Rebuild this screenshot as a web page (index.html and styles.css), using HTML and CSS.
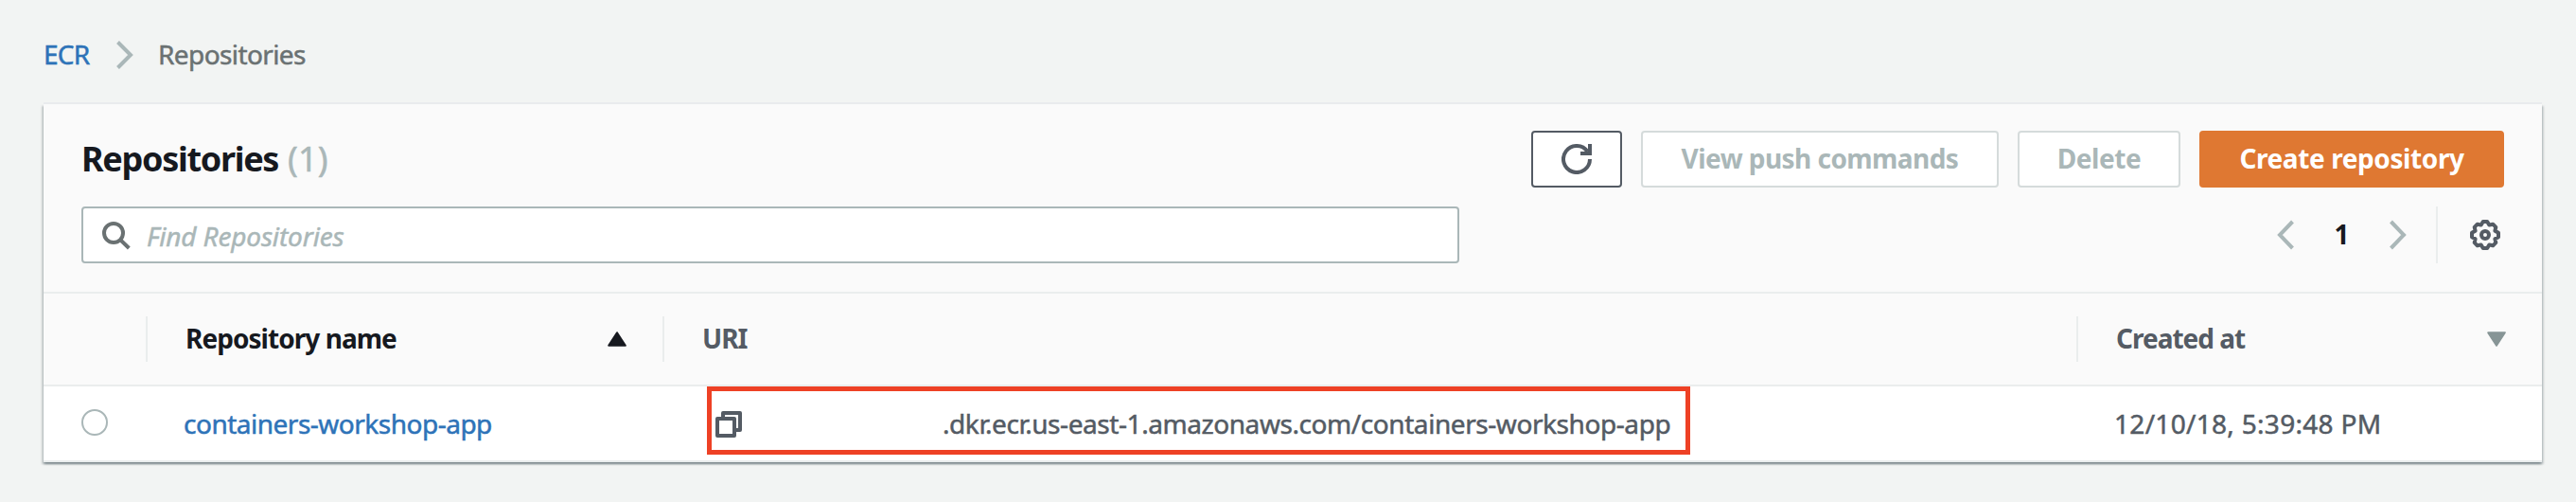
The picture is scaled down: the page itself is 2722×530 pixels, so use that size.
FILE: index.html
```html
<!DOCTYPE html>
<html lang="en">
<head>
<meta charset="utf-8">
<title>ECR Repositories</title>
<link rel="stylesheet" href="styles.css">
</head>
<body>
<nav class="breadcrumb">
  <a class="crumb-link">ECR</a>
  <svg class="crumb-sep" width="20" height="32" viewBox="0 0 20 32"><path d="M2.5 2.5 16 16 2.5 29.5"/></svg>
  <span class="crumb-current">Repositories</span>
</nav>
<main class="card">
  <header class="toolbar">
    <div class="row title-row">
      <h1 class="title"><span class="title-name">Repositories</span><span class="count">(1)</span></h1>
      <div class="actions">
        <button class="btn btn-refresh" aria-label="Refresh">
          <svg width="32" height="32" viewBox="0 0 32 32"><path d="M30 16A14 14 0 1 1 27.5 8"/><path d="M30 0V10H20"/></svg>
        </button>
        <button class="btn btn-push" disabled><span>View push commands</span></button>
        <button class="btn btn-delete" disabled><span>Delete</span></button>
        <button class="btn btn-create"><span>Create repository</span></button>
      </div>
    </div>
    <div class="row filter-row">
      <div class="search">
        <svg width="32" height="32" viewBox="0 0 32 32"><circle cx="12" cy="14" r="10"/><path d="M19 21 28.3 30"/></svg>
        <span class="placeholder">Find Repositories</span>
      </div>
      <div class="pager">
        <svg class="chev" width="20" height="32" viewBox="0 0 20 32"><path d="M17.5 2 4 16 17.5 30"/></svg>
        <span class="page">1</span>
        <svg class="chev" width="20" height="32" viewBox="0 0 20 32"><path d="M2.5 2 16 16 2.5 30"/></svg>
        <div class="settings">
          <svg width="32" height="32" viewBox="0 0 32 32"><path d="M13.8 2H18.2L20.3 5.6 24.2 4.7 27.3 7.8 26.4 11.7 30 13.8V18.2L26.4 20.3 27.3 24.2 24.2 27.3 20.3 26.4 18.2 30H13.8L11.7 26.4 7.8 27.3 4.7 24.2 5.6 20.3 2 18.2V13.8L5.6 11.7 4.7 7.8 7.8 4.7 11.7 5.6Z"/><circle cx="16" cy="16" r="4"/></svg>
        </div>
      </div>
    </div>
  </header>
  <section class="table">
    <div class="grid head">
      <div class="cell sep"></div>
      <div class="cell sep active"><span class="h-name">Repository name</span>
        <svg width="20" height="16" viewBox="0 0 20 16"><path d="M10 1.2 18.8 14.8H1.2Z"/></svg></div>
      <div class="cell sep"><span class="h-uri">URI</span></div>
      <div class="cell"><span class="h-created">Created at</span>
        <svg class="down" width="20" height="16" viewBox="0 0 20 16"><path d="M10 14.8 18.8 1.2H1.2Z"/></svg></div>
    </div>
    <div class="grid item">
      <div class="cell-radio"><span class="radio"></span></div>
      <div class="cell-name"><a class="repo-link">containers-workshop-app</a></div>
      <div class="cell-uri">
        <div class="highlight">
          <svg width="28" height="28" viewBox="0 0 28 28"><path d="M8 8V2H26V20H20M2 8H20V26H2Z"/></svg>
          <span class="uri">.dkr.ecr.us-east-1.amazonaws.com/containers-workshop-app</span>
        </div>
      </div>
      <div class="cell-date"><span class="date">12/10/18, 5:39:48 PM</span></div>
    </div>
  </section>
</main>
</body>
</html>
```
FILE: styles.css
```css
* { box-sizing: border-box; }
body {
  margin: 0;
  height: 530px;
  overflow: hidden;
  background: #f2f4f3;
  color: #545b64;
  font: 28px/40px "Noto Sans", "Open Sans", sans-serif;
  white-space: nowrap;
}
svg { display: block; flex: none; fill: none; }
.crumb-link, .crumb-current, .count, .placeholder, .repo-link, .uri, .date { -webkit-text-stroke: .5px currentColor; }
.breadcrumb {
  display: flex;
  align-items: center;
  height: 110px;
  padding: 6px 0 0 46px;
}
.crumb-link { width: 76px; color: #2e73b8; letter-spacing: -.8px; margin-bottom: 2px; }
.crumb-sep { stroke: #aab7b8; stroke-width: 4; margin-right: 25px; }
.crumb-current { color: #6a7172; letter-spacing: -.6px; margin-bottom: 2px; }
.card {
  width: 2640px;
  height: 378px;
  margin-left: 46px;
  background: #fff;
  box-shadow:
    0 -2px 0 #e9ebed,
    0 2px 2px rgba(0, 28, 36, .3),
    2px 2px 2px rgba(0, 28, 36, .15),
    -2px 2px 2px rgba(0, 28, 36, .15);
}
.toolbar {
  height: 200px;
  padding: 28px 40px 0;
  background: #fafafa;
  border-bottom: 2px solid #eaeded;
}
.row { display: flex; align-items: center; justify-content: space-between; height: 60px; }
.filter-row { margin-top: 20px; }
.title { display: flex; gap: 10px; margin: 0; font-size: 36px; line-height: 60px; }
.title-name { width: 208px; color: #16191f; letter-spacing: -1.3px; }
.count { color: #aab7b8; font-weight: 400; letter-spacing: .2px; }
.actions { display: flex; gap: 20px; }
.btn {
  display: flex;
  align-items: center;
  justify-content: center;
  height: 60px;
  padding: 0;
  border: 2px solid #d5dbdb;
  border-radius: 4px;
  background: #fff;
  color: #aab7b8;
  font: bold 28px/40px "Noto Sans", "Open Sans", sans-serif;
}
.btn span { margin-bottom: 2px; }
.btn-refresh { width: 96px; border-color: #545b64; }
.btn-refresh svg { stroke: #545b64; stroke-width: 4; }
.btn-push { width: 378px; letter-spacing: -.55px; }
.btn-delete { width: 172px; letter-spacing: -.4px; }
.btn-create { width: 322px; background: #df7832; border-color: #df7832; color: #fff; letter-spacing: -.4px; }
.search {
  display: flex;
  align-items: center;
  gap: 15px;
  width: 1456px;
  height: 60px;
  padding-left: 20px;
  border: 2px solid #aab7b8;
  border-radius: 4px;
  background: #fff;
}
.search svg { stroke: #6a7172; stroke-width: 4; }
.placeholder { color: #aab7b8; font-style: italic; letter-spacing: -.15px; padding-top: 1px; }
.pager { display: flex; align-items: center; }
.chev { stroke: #aab7b8; stroke-width: 4; }
.page { width: 99px; margin-bottom: 2px; text-align: center; color: #16191f; font-weight: bold; }
.settings {
  display: flex;
  align-items: center;
  justify-content: flex-end;
  width: 72px;
  height: 60px;
  margin-left: 30px;
  padding-right: 4px;
  border-left: 2px solid #eaeded;
}
.settings svg { stroke: #545b64; stroke-width: 4; stroke-linejoin: round; }
.grid { display: grid; grid-template-columns: 110px 546px 1494px 490px; }
.head {
  height: 98px;
  align-items: center;
  background: #fafafa;
  border-bottom: 2px solid #eaeded;
  font-weight: bold;
}
.cell {
  display: flex;
  align-items: center;
  justify-content: space-between;
  height: 48px;
  padding: 0 38px 0 40px;
}
.cell span { margin-bottom: 2px; }
.sep { border-right: 2px solid #eaeded; }
.active { color: #16191f; }
.active svg { fill: #16191f; stroke: #16191f; stroke-width: 2; stroke-linejoin: round; }
.down { fill: #879596; stroke: #879596; stroke-width: 2; stroke-linejoin: round; }
.h-name { letter-spacing: -.95px; }
.h-uri { letter-spacing: -1px; }
.h-created { letter-spacing: -1px; }
.item { height: 80px; border-bottom: 2px solid #eaeded; }
.cell-radio { padding: 24px 0 0 40px; }
.radio { display: block; width: 28px; height: 28px; border: 2px solid #aab7b8; border-radius: 50%; background: #fff; }
.cell-name { padding: 19px 0 0 38px; }
.repo-link { color: #2e73b8; letter-spacing: -.5px; }
.cell-uri { padding-left: 45px; }
.highlight {
  display: flex;
  align-items: center;
  width: 1039px;
  height: 72px;
  padding: 8px 0 0 4px;
  border: 5px solid #ee4125;
}
.highlight svg { stroke: #545b64; stroke-width: 4; stroke-linejoin: round; }
.uri { margin: 0 0 2px 212px; letter-spacing: -.43px; }
.cell-date { padding: 19px 0 0 38px; }
.date { letter-spacing: .3px; }
```
